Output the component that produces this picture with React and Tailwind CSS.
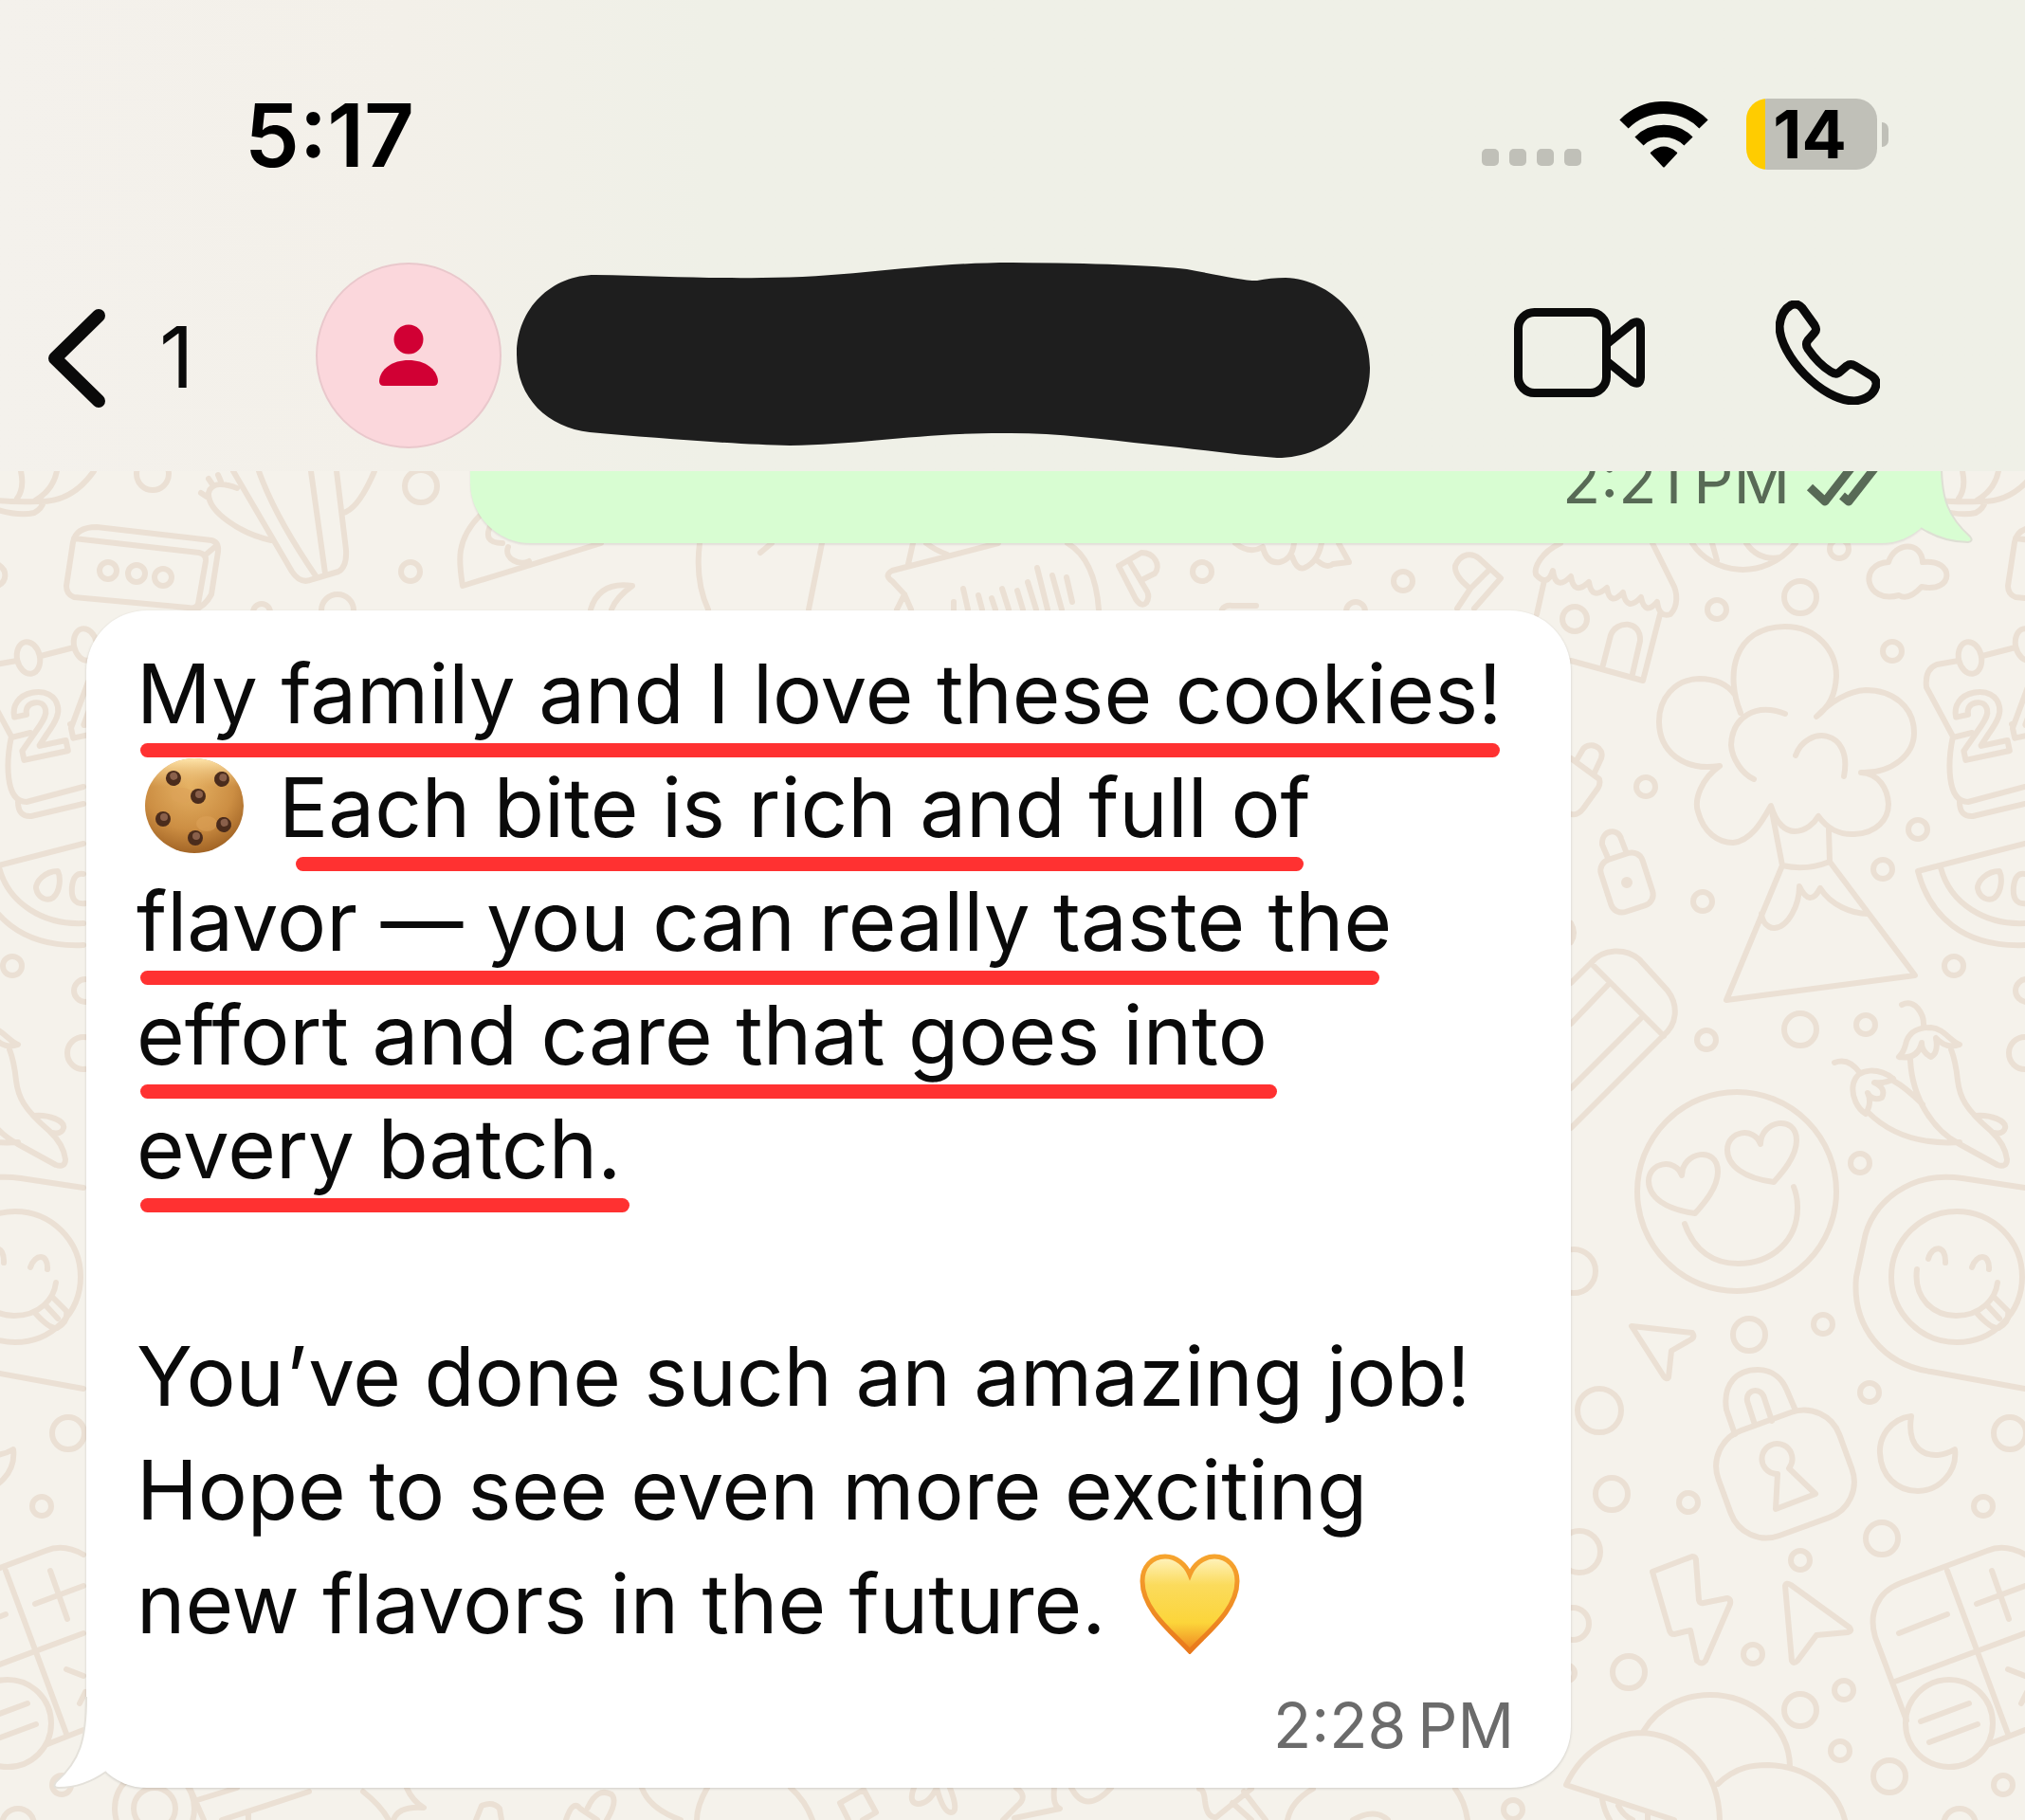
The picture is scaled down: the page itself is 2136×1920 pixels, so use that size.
const DOTS = [
  [161, 500, 17], [444, 513, 17], [433, 603, 10], [356, 644, 17], [276, 646, 9],
  [114, 602, 9], [144, 605, 9], [172, 609, 9], [1268, 603, 10], [1480, 613, 10],
  [1811, 643, 10], [1899, 630, 17], [1940, 579, 10], [1996, 687, 10], [1736, 830, 10],
  [1796, 951, 10], [2023, 875, 10], [1986, 917, 10], [2061, 1019, 10], [1899, 1086, 17],
  [1968, 1081, 10], [1800, 1097, 10], [1430, 645, 10], [1661, 653, 13], [2136, 1111, 17],
  [1962, 1227, 10], [1660, 1341, 23], [1845, 1408, 17], [1923, 1397, 10], [1972, 1469, 10],
  [1687, 1488, 23], [2120, 1512, 17], [1700, 1576, 17], [1781, 1585, 10], [2092, 1589, 10],
  [1985, 1623, 17], [1666, 1637, 22], [1899, 1646, 10], [1659, 1713, 17], [1849, 1745, 10],
  [1653, 1765, 8], [1718, 1764, 17], [1899, 1804, 17], [1945, 1783, 10], [1941, 1847, 10],
  [1993, 1874, 17], [2113, 1883, 10], [1596, 1909, 10], [2067, 1925, 17], [163, 1908, 22],
  [163, 1908, 42], [1832, 1257, 105], [2064, 1347, 69], [2056, 1818, 46], [2138, 1045, 12],
];

const DOODLES = [
  // cup
  'M-10 527Q10 530 40 529C67 530 85 517 99 497M22 497Q26 515 18 526M60 497Q56 517 37 528M-6 537Q20 545 36 541Q44 537 46 529',
  // message card
  'M78 568L210 583Q218 585 217 592L209 637Q207 643 198 641L78 630Q70 627 70 618L77 572Q80 556 102 556L223 570Q231 572 230 582L223 627Q216 640 205 643M216 586L229 575',
  // celery
  'M246 497L308 603Q317 617 330 611L357 603Q366 598 365 580L355 497M273 497Q290 545 334 609M328 497L343 605M286 570C254 563 219 540 220 520C223 508 237 510 250 515M212 520L218 524M220 505L224 511M230 501L233 508M395 497Q378 537 362 541',
  // pizza slice and moon
  'M507 543C480 570 484 593 488 618L634 573M518 553Q508 573 530 573M536 577C531 590 549 597 558 592M623 643Q632 613 667 618Q650 630 645 643',
  'M738 573Q733 613 747 643M867 573L853 643M814 573L802 583',
  // letter
  'M963 573L958 595M977 573Q986 580 999 585M1053 573L941 602Q932 607 941 613L954 627L961 643M954 627L946 643M1126 573Q1155 590 1159 643M1006 635V643M1016 621L1021 643M1032 628L1036 643M1046 631L1050 643M1057 621L1064 643M1073 623L1079 643M1084 614L1093 643M1094 599L1105 643M1110 607L1120 643M1125 609L1131 635',
  'M1180 597L1198 632Q1204 641 1209 636Q1213 630 1210 624L1191 592M1180 597L1204 583C1218 583 1225 597 1218 605L1204 612',
  'M1303 573Q1318 585 1332 577Q1336 595 1350 593Q1363 590 1365 573M1363 587Q1368 602 1376 599Q1390 593 1394 573M1390 592Q1400 600 1406 595L1423 593L1412 573M1289 643Q1292 638 1300 639L1325 639',
  'M1537 642L1551 621Q1534 608 1535 597C1541 583 1553 583 1560 589L1583 610L1555 642M1551 621L1571 601',
  // hut
  'M1646 573C1625 583 1618 599 1620 606Q1632 620 1638 602Q1641 624 1657 608Q1660 629 1676 614Q1679 634 1695 620Q1698 640 1712 625Q1716 646 1731 630Q1735 650 1748 635Q1750 652 1762 648C1770 640 1770 625 1764 615L1743 573M1629 612L1621 648M1751 648L1733 718L1657 697M1690 705L1699 670C1705 654 1731 654 1730 676L1722 711',
  'M1785 573C1805 605 1860 615 1894 573M1806 573L1811 591M1842 573Q1855 592 1878 588',
  'M1992 593C1999 571 2027 571 2028 593C2062 589 2062 626 2027 619Q2013 634 2003 628C1968 638 1959 595 1992 593Z',
  // volcano
  'M1836 752C1820 713 1827 662 1883 661C1916 661 1937 686 1937 713C1936 733 1930 745 1916 756C1930 741 1949 729 1968 728C1996 728 2019 745 2019 773C2019 796 1996 816 1963 815C1982 816 1991 832 1992 848C1992 864 1980 879 1956 880C1942 881 1928 875 1918 861C1914 868 1905 877 1893 877C1884 877 1874 870 1868 850C1860 864 1848 887 1828 889C1813 889 1797 879 1791 856C1787 844 1794 822 1814 808C1775 814 1750 792 1750 761C1750 737 1766 717 1792 716Q1818 716 1830 733M1883 753C1851 741 1827 757 1826 786C1827 800 1837 816 1850 822M1894 797C1905 765 1955 768 1945 819',
  'M1869 856L1880 913Q1905 919 1930 909L1929 875M1880 913L1821 1055L2020 1029L1930 909M1858 964C1860 980 1872 979 1872 979C1886 978 1898 955 1898 935Q1909 958 1920 937C1931 955 1954 964 1970 964',
  // calendar
  'M2066 697L2043 701Q2030 706 2032 725L2060 777C2055 800 2052 846 2076 846L2136 830M2067 846Q2067 862 2081 861L2136 848M2060 778L2080 773M2091 692L2126 683M2122 764L2136 761',
  // melon
  'M2136 890L2023 919C2035 965 2070 1000 2136 997M2047 915C2057 954 2095 976 2136 974M2109 919C2095 919 2086 930 2086 937C2088 948 2098 951 2104 947C2112 940 2112 925 2109 919ZM2136 922Q2126 920 2124 935Q2122 955 2138 953',
  'M1657 800L1687 822Q1689 828 1683 835L1670 853Q1663 862 1655 858M1663 802L1670 790C1677 782 1693 788 1689 800L1682 815M1696 905L1690 891C1689 875 1707 873 1710 885L1715 898M1657 974Q1663 984 1657 994',
  // pencil
  'M1657 1037L1678 1016C1691 1000 1715 1000 1729 1012L1759 1045C1771 1061 1769 1081 1754 1093L1657 1190M1678 1016L1755 1093M1698 1037L1657 1080M1732 1073L1657 1148',
  // chillies
  'M2006 1060C2020 1053 2030 1070 2029 1083M2003 1115Q2008 1110 2010 1102C2013 1088 2023 1084 2037 1084C2050 1085 2057 1098 2067 1102Q2053 1107 2042 1095Q2045 1110 2037 1115Q2027 1110 2027 1100Q2023 1118 2003 1115M2015 1118C2017 1160 2040 1193 2067 1207L2107 1229Q2117 1232 2117 1223Q2115 1207 2100 1193C2073 1170 2067 1157 2065 1140Q2063 1120 2058 1107M2083 1177C2100 1175 2117 1183 2115 1190Q2113 1197 2103 1195M1935 1121Q1950 1115 1962 1132M1997 1138C1983 1127 1960 1125 1955 1143C1952 1157 1960 1170 1968 1175Q1975 1163 1970 1153Q1975 1162 1985 1158Q1990 1148 1977 1142Q1990 1143 1997 1138M1997 1140Q2010 1147 2028 1165M1970 1173C1990 1193 2020 1208 2067 1205',
  // heart eyes
  'M1871 1247C1840 1243 1822 1230 1822 1213C1822 1193 1850 1188 1857 1207C1857 1182 1895 1175 1895 1203C1895 1220 1880 1237 1871 1247ZM1788 1280C1757 1276 1739 1263 1739 1246C1739 1226 1767 1221 1774 1240C1774 1215 1812 1208 1812 1236C1812 1253 1797 1270 1788 1280ZM1777 1291C1787 1320 1808 1333 1833 1333C1870 1333 1896 1308 1896 1274Q1896 1262 1892 1252',
  // tongue face
  'M2136 1253L2070 1243C2017 1235 1973 1267 1966 1310L1958 1347C1953 1400 1987 1440 2037 1447L2136 1465M2034 1328C2038 1313 2053 1313 2052 1332M2080 1337C2085 1322 2099 1322 2098 1339M2022 1339C2018 1370 2040 1388 2063 1388C2090 1388 2105 1370 2107 1353M2085 1385Q2100 1402 2108 1401Q2120 1395 2118 1383L2103 1368M2097 1378L2109 1391',
  'M1721 1399L1785 1406Q1788 1410 1784 1413L1763 1425L1760 1453Q1758 1456 1755 1452Z',
  // padlock
  'M1830 1513L1821 1487C1817 1460 1832 1445 1854 1445C1872 1445 1881 1457 1885 1467L1894 1488M1851 1503L1843 1478C1841 1465 1858 1463 1861 1475L1869 1499M1875 1555A16 16 0 1 1 1887 1549L1915 1576L1873 1592Z',
  'M2016 1494C1993 1497 1982 1517 1983 1533C1984 1557 2001 1573 2023 1573C2045 1573 2065 1553 2062 1529C2038 1543 2010 1533 2016 1494Z',
  'M1743 1658L1785 1642Q1789 1642 1789 1647L1792 1688Q1793 1692 1797 1691L1822 1686Q1826 1687 1825 1692L1799 1752Q1795 1757 1790 1752L1783 1720L1766 1724Q1762 1724 1761 1720Z',
  'M1883 1673Q1884 1669 1889 1672L1951 1717Q1954 1721 1949 1722L1916 1725L1896 1752Q1892 1756 1890 1752Z',
  // keypad
  'M2136 1640Q2115 1628 2096 1636L2005 1670C1979 1680 1971 1703 1978 1727L2011 1815M2054 1657L2118 1829M1996 1775L2136 1723M2098 1840L2136 1825M2003 1723L2054 1703M2085 1692L2136 1673M2101 1657L2119 1708M2118 1761L2136 1768M2132 1797L2138 1785M2026 1816L2077 1797M2035 1838L2086 1819',
  // helmets
  'M1766 1920L1652 1883C1670 1843 1707 1828 1731 1828C1780 1830 1813 1870 1814 1920M1733 1827C1751 1797 1780 1788 1804 1788C1847 1788 1887 1820 1888 1863M1812 1882C1832 1863 1850 1862 1865 1862C1905 1863 1938 1887 1946 1920M1690 1898Q1692 1910 1698 1920M1707 1905Q1712 1915 1722 1920M1738 1913V1920',
  'M200 1886L215 1920M208 1899L250 1886M326 1890L234 1920M262 1912V1920M383 1890Q402 1905 410 1920M429 1886Q435 1900 447 1907Q420 1905 415 1920M502 1920L508 1905Q520 1900 527 1908L529 1920M597 1920Q604 1898 612 1908L630 1920M620 1907Q630 1885 645 1893Q652 1900 640 1920M677 1886Q685 1908 718 1920M746 1886Q735 1905 735 1920M834 1886Q850 1900 857 1920M895 1920L886 1902L911 1888L924 1912L910 1920M964 1886Q958 1902 968 1903Q980 1903 988 1886Q995 1912 1003 1912Q1012 1912 1002 1886M1072 1886Q1085 1895 1073 1905L1058 1920M1112 1886Q1110 1905 1118 1908L1070 1918M1130 1886Q1145 1915 1172 1886',
  'M1265 1887Q1270 1887 1271 1900Q1273 1918 1283 1917L1320 1887M1300 1902L1320 1920M1312 1890L1335 1920M1385 1887Q1362 1900 1358 1920M1535 1887Q1545 1900 1548 1920M1427 1920Q1450 1907 1464 1920',
];

const REVIEW_LINES = [
  { text: 'My family and I love these cookies!', mark: 'left-[4px] w-[1434px]' },
  { text: 'Each bite is rich and full of', mark: 'left-[168px] w-[1063px]', cookie: true },
  { text: 'flavor — you can really taste the', mark: 'left-[4px] w-[1307px]' },
  { text: 'effort and care that goes into', mark: 'left-[4px] w-[1199px]' },
  { text: 'every batch.', mark: 'left-[4px] w-[516px]' },
];

function Wallpaper() {
  return (
    <svg
      viewBox="0 497 2136 1423"
      preserveAspectRatio="xMidYMin slice"
      className="absolute inset-0 h-full w-full"
      fill="none"
      stroke="#ebe0d4"
      strokeWidth="6"
      strokeLinecap="round"
      strokeLinejoin="round"
      aria-hidden="true"
    >
      <g id="tile">
        {DOTS.map(([cx, cy, r]) => (
          <circle key={`${cx}-${cy}-${r}`} cx={cx} cy={cy} r={r} />
        ))}
        {DOODLES.map((d) => (
          <path key={d} d={d} />
        ))}
        <ellipse cx="2078" cy="694" rx="12" ry="17" fill="#f5f2eb" transform="rotate(-12 2078 694)" />
        <ellipse cx="2138" cy="680" rx="12" ry="17" fill="#f5f2eb" transform="rotate(-12 2138 680)" />
        <rect x="1693" y="902" width="46" height="58" rx="12" transform="rotate(-18 1716 931)" />
        <circle cx="1716" cy="931" r="3" fill="#ebe0d4" />
        <rect x="1815" y="1496" width="136" height="118" rx="40" transform="rotate(-20 1883 1555)" />
        <text
          x="2068"
          y="803"
          fontSize="92"
          fontWeight="700"
          fill="#f5f2eb"
          className="font-['Inter',sans-serif]"
          transform="rotate(-12 2068 803)"
        >
          24
        </text>
      </g>
      <use href="#tile" x="-2048" />
      <use href="#tile" x="2048" />
    </svg>
  );
}

function WifiIcon() {
  return (
    <svg viewBox="0 0 94 70" className="h-[70px] w-[94px]" aria-label="Wi-Fi">
      <path d="M5 24A59 59 0 0 1 89 24" fill="none" stroke="#000" strokeWidth="13" />
      <path d="M21 42A37 37 0 0 1 73 42" fill="none" stroke="#000" strokeWidth="13" />
      <path d="M33 55Q32 54 34 53Q47 42 60 53Q62 54 61 55L48 69Q47 70 46 69Z" />
    </svg>
  );
}

function StatusBar() {
  return (
    <div className="flex h-[245px] items-start justify-between pr-[144px] pl-[258px]">
      <time className="mt-[88px] text-[92px] leading-[110px] font-semibold text-black">5:17</time>
      <div className="mt-[104px] flex items-center">
        <div className="mt-[48px] mr-[40px] flex gap-[11px]">
          <span className="size-[18px] rounded-[5px] bg-[#c0c0b8]" />
          <span className="size-[18px] rounded-[5px] bg-[#c0c0b8]" />
          <span className="size-[18px] rounded-[5px] bg-[#c0c0b8]" />
          <span className="size-[18px] rounded-[5px] bg-[#c0c0b8]" />
        </div>
        <WifiIcon />
        <div className="ml-[40px] flex h-[75px] w-[138px] items-center justify-center rounded-[22px] bg-gradient-to-r from-[#ffcc00] from-[20px] to-[#c0c0b8] to-[20px] pr-1 text-[70px] leading-[75px] font-bold text-black">
          14
        </div>
        <span className="ml-[5px] h-[26px] w-[7px] rounded-r-full bg-[#c0c0b8]" />
      </div>
    </div>
  );
}

function ChatHeader() {
  return (
    <div className="flex h-[252px] items-start text-[#0a0a0a]">
      <button className="mt-[76px] ml-[50px] flex items-center" aria-label="Back">
        <svg
          viewBox="0 0 62 108"
          className="h-[108px] w-[62px]"
          fill="none"
          stroke="currentColor"
          strokeWidth="14"
          strokeLinecap="round"
          strokeLinejoin="round"
        >
          <path d="M54 10L8 55L54 100" />
        </svg>
        <span className="ml-[56px] text-[90px] leading-[112px]">1</span>
      </button>
      <div className="mt-[32px] ml-auto flex flex-1 items-start pl-[128px]">
        <svg viewBox="0 0 197 197" className="size-[197px] shrink-0" aria-label="Profile">
          <circle cx="98" cy="98" r="97" fill="#fbd7dc" stroke="#e9c8cc" strokeWidth="2" />
          <circle cx="98" cy="81" r="15.5" fill="#d10034" />
          <path d="M67 125C68 112 81 103 98 103S128 112 129 125Q129 130 124 130H72Q67 130 67 125Z" fill="#d10034" />
        </svg>
        <svg viewBox="545 277 901 207" className="ml-[15px] h-[207px] w-[901px] shrink-0" aria-hidden="true">
          <path
            fill="#1e1e1e"
            d="M545 374C545 325 582 290 628 290C690 291 750 294 804 293C900 293 970 277 1068 277Q1200 278 1252 284C1285 290 1310 296 1326 296Q1340 293 1356 293C1405 295 1445 338 1445 388C1445 440 1404 483 1347 483C1300 480 1260 473 1215 469C1160 463 1110 456 1056 457C970 457 910 469 833 470C780 469 690 462 622 456C578 451 545 420 545 374Z"
          />
        </svg>
      </div>
      <div className="mt-[72px] mr-[153px] flex">
        <button aria-label="Video call">
          <svg
            viewBox="1597 317 138 110"
            className="h-[110px] w-[138px]"
            fill="none"
            stroke="currentColor"
            strokeWidth="9"
            strokeLinejoin="round"
          >
            <rect x="1601.5" y="329.5" width="93" height="85" rx="17" />
            <path d="M1696 362L1722 341Q1730 337 1730.500 346V398Q1730 407 1722 403L1696 382" />
          </svg>
        </button>
        <button aria-label="Call" className="ml-[138px]">
          <svg
            viewBox="1873 317 110 110"
            className="size-[110px]"
            fill="none"
            stroke="currentColor"
            strokeWidth="9"
            strokeLinejoin="round"
          >
            <path d="M1901 325L1914 343Q1917 348 1914 351L1907 359Q1904 363 1907 368Q1918 384 1931 392Q1937 396 1941 392L1948 386Q1952 383 1957 386L1975 397Q1980 401 1979 406C1977 416 1968 422 1956 423C1922 423 1877 375 1877 344C1878 334 1882 326 1889 322Q1896 319 1901 325Z" />
          </svg>
        </button>
      </div>
    </div>
  );
}

function Cookie() {
  const chips = [
    [31, 22, -20], [82, 23, 10], [57, 41, 0], [20, 65, 0], [84, 71, -10], [54, 85, 0],
  ];

  return (
    <svg viewBox="0 0 106 102" className="mr-[36px] ml-[8px] inline-block h-[102px] w-[106px] align-[-18px]" role="img" aria-label="Cookie">
      <defs>
        <radialGradient id="dough" cx="0.45" cy="0.3" r="0.75">
          <stop offset="0" stopColor="#e5b163" />
          <stop offset="0.6" stopColor="#cc8e43" />
          <stop offset="1" stopColor="#9b5d20" />
        </radialGradient>
        <linearGradient id="glaze" x1="0" y1="0" x2="0" y2="1">
          <stop offset="0" stopColor="#ffe6ac" />
          <stop offset="0.3" stopColor="#f3c982" stopOpacity="0" />
        </linearGradient>
      </defs>
      <ellipse cx="53" cy="51" rx="52" ry="50" fill="url(#dough)" />
      <ellipse cx="53" cy="51" rx="52" ry="50" fill="url(#glaze)" />
      <ellipse cx="40" cy="40" rx="12" ry="8" fill="#dca258" opacity="0.6" />
      <ellipse cx="66" cy="70" rx="11" ry="8" fill="#dca258" opacity="0.6" />
      {chips.map(([cx, cy, angle]) => (
        <g key={`${cx}-${cy}`} transform={`rotate(${angle} ${cx} ${cy})`}>
          <ellipse cx={cx} cy={cy} rx="8" ry="8" fill="#4b2c1c" />
          <ellipse cx={cx + 1} cy={cy - 2} rx="4" ry="4" fill="#8a604b" />
        </g>
      ))}
    </svg>
  );
}

function YellowHeart() {
  return (
    <svg viewBox="0 0 106 106" className="ml-[36px] inline-block size-[106px] align-[-22px]" role="img" aria-label="Yellow heart">
      <defs>
        <linearGradient id="heart" x1="0" y1="0" x2="0" y2="1">
          <stop offset="0" stopColor="#fff3c0" />
          <stop offset="0.3" stopColor="#fbdb5c" />
          <stop offset="0.7" stopColor="#fcd53a" />
          <stop offset="1" stopColor="#ee8420" />
        </linearGradient>
        <linearGradient id="rim" x1="0" y1="0" x2="0" y2="1">
          <stop offset="0" stopColor="#f6a42e" />
          <stop offset="1" stopColor="#e9791c" />
        </linearGradient>
      </defs>
      <path
        d="M53 103C36 84 3 60 3 29C3 14 13 3 27 3C39 3 49 12 53 22C57 12 67 3 79 3C93 3 103 14 103 29C103 60 70 84 53 103Z"
        fill="url(#heart)"
        stroke="url(#rim)"
        strokeWidth="5"
      />
    </svg>
  );
}

function SentMessage() {
  return (
    <article className="relative -mt-16 mr-[88px] ml-[496px] flex items-end justify-end rounded-[64px] bg-[#d8fdd2] pt-9 pr-16 pb-7 text-[#586a56] shadow-[0_2px_2px_rgba(0,0,0,0.08)]">
      <time className="text-[66px] leading-[76px]">2:21&#8201;PM</time>
      <svg
        viewBox="1905 490 80 48"
        className="mb-[7px] ml-[16px] h-[48px] w-[80px]"
        fill="none"
        stroke="currentColor"
        strokeWidth="9"
        strokeLinejoin="round"
        aria-label="Delivered"
      >
        <path d="M1910 514L1926 529L1958 488M1944 523L1951 529L1983 488" />
      </svg>
      {/* tail */}
      <svg viewBox="1970 484 114 92" className="absolute right-[-36px] bottom-[-3px] h-[92px] w-[114px]" aria-hidden="true">
        <path d="M2000 484H2048C2047 528 2056 546 2078 566Q2082 571 2076 572Q2050 572 2026 557L2000 550Z" fill="#d8fdd2" />
        <path
          d="M2048 484C2047 528 2056 546 2078 566Q2082 571 2076 572Q2050 572 2026 557"
          fill="none"
          stroke="#dedfd4"
          strokeWidth="2"
        />
      </svg>
    </article>
  );
}

function ReceivedMessage() {
  return (
    <article className="relative mt-[71px] ml-[91px] w-[1566px] max-w-full rounded-[64px] bg-white pt-[28px] pr-[60px] pb-7 pl-[53px] text-[#0a0a0a] shadow-[0_1px_3px_rgba(0,0,0,0.16)]">
      <p className="text-[87px] leading-[120px] whitespace-nowrap">
        {REVIEW_LINES.map((line) => (
          <span key={line.text} className="relative block h-[120px]">
            {line.cookie && <Cookie />}
            {line.text}
            <span className={`absolute top-[112px] z-10 h-[15px] rounded-full bg-[#ff3131] ${line.mark}`} />
          </span>
        ))}
      </p>
      <p className="mt-[120px] text-[87px] leading-[120px] whitespace-nowrap">
        <span className="block h-[120px]">You’ve done such an amazing job!</span>
        <span className="block h-[120px]">Hope to see even more exciting</span>
        <span className="block h-[120px]">
          new flavors in the future.
          <YellowHeart />
        </span>
      </p>
      <time className="mt-[30px] block text-right text-[66px] leading-[76px] text-[#6b6b6b]">2:28&#8201;PM</time>
      <svg viewBox="54 1790 140 99" className="absolute bottom-[-3px] left-[-37px] h-[99px] w-[140px]" aria-hidden="true">
        <path d="M130 1790H91C91 1836 84 1858 59 1880Q55 1886 62 1886Q88 1886 112 1869L130 1860Z" fill="#fff" />
        <path
          d="M91 1790C91 1836 84 1858 59 1880Q55 1886 62 1886Q88 1886 112 1869"
          fill="none"
          stroke="#e4e1da"
          strokeWidth="2"
        />
      </svg>
    </article>
  );
}

export default function App() {
  return (
    <div className="flex min-h-screen flex-col overflow-hidden bg-[#f5f2eb] font-['Inter',sans-serif]">
      <header className="relative z-10 bg-gradient-to-r from-[#f4f1ec] via-[#f3f0e9] via-20% to-[#eff0e7] to-35%">
        <StatusBar />
        <ChatHeader />
      </header>
      <main className="relative flex flex-1 flex-col overflow-hidden">
        <Wallpaper />
        <SentMessage />
        <ReceivedMessage />
      </main>
    </div>
  );
}
